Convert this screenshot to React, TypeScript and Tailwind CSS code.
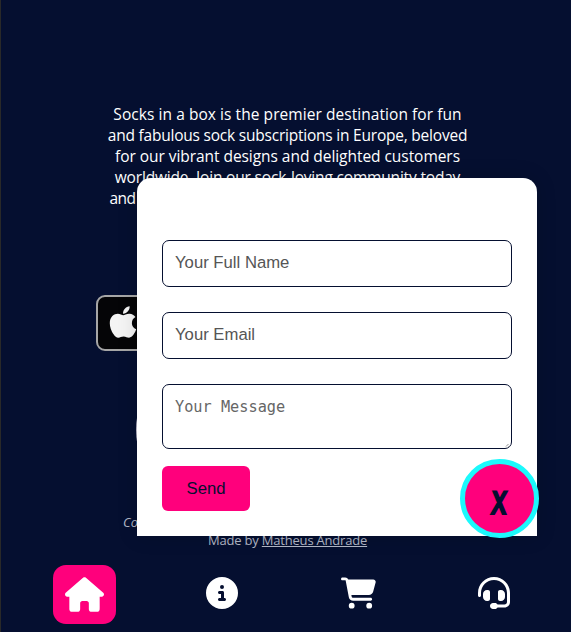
import type { ReactNode } from "react";
import { FaApple, FaCartShopping, FaCircleInfo, FaHeadset, FaHouse } from "react-icons/fa6";

function Line({ className, children }: { className: string; children: ReactNode }) {
  return <span className={`block h-[21px] whitespace-nowrap leading-[21px] ${className}`}>{children}</span>;
}

function ContactForm() {
  return (
    <form className="absolute left-[136px] top-[178px] h-[358px] w-[400px] rounded-t-[14px] bg-white px-[25px] pt-[62px] shadow-[0_0_20px_rgba(0,0,0,0.15)] font-['Liberation_Sans',sans-serif] text-[16.7px]">
      <input
        placeholder="Your Full Name"
        className="mb-[25px] block h-[47px] w-full rounded-[7px] border border-[#050f30] bg-white px-3 pb-[2px] placeholder:text-[#555]"
      />
      <input
        placeholder="Your Email"
        className="mb-[25px] block h-[47px] w-full rounded-[7px] border border-[#050f30] bg-white px-3 pb-[2px] placeholder:text-[#555]"
      />
      <textarea
        placeholder="Your Message"
        className="mb-[17px] block h-[65px] w-full resize-none rounded-[7px] border border-[#050f30] bg-white px-3 py-[13px] font-['DejaVu_Sans_Mono',monospace] text-[15.25px] leading-[19px] placeholder:text-[#666]"
      />
      <button type="button" className="h-[45px] w-[88px] rounded-[6px] bg-[#ff007c] text-[#050f30]">
        Send
      </button>
      <svg className="absolute left-[368px] top-[265px] size-[5px]" viewBox="0 0 5 5" stroke="#777" strokeWidth="0.8">
        <path d="M1 3.5 3.5 1M3 4.5 4.5 3" />
      </svg>
      <button
        type="button"
        aria-label="Close"
        className="absolute left-[323px] top-[281px] flex size-[79px] items-center justify-center rounded-full border-[5px] border-[#1cf9fc] bg-[#ff007c] font-['Inter',sans-serif] text-[31px] font-semibold text-[#050f30]"
      >
        <span className="mt-[8px] scale-x-[0.72] -skew-x-6 leading-none [-webkit-text-stroke:2px_#050f30]">X</span>
      </button>
    </form>
  );
}

function Navigation() {
  return (
    <nav className="mt-auto flex h-[76px] items-start pl-[52px] pt-[9px] text-[32px] text-white">
      <a className="flex h-[59px] w-[63px] shrink-0 items-center justify-center rounded-[13px] bg-[#ff007c]">
        <FaHouse className="h-[35px] w-[39px]" />
      </a>
      <a className="ml-[90px] mt-[12px] shrink-0"><FaCircleInfo /></a>
      <a className="ml-[103px] mt-[12px] shrink-0"><FaCartShopping className="h-[32px] w-[35px]" /></a>
      <a className="ml-[102px] mt-[12px] shrink-0"><FaHeadset /></a>
    </nav>
  );
}

export default function App() {
  return (
    <div className="relative flex h-[632px] w-full flex-col overflow-hidden border-l border-[#292929] bg-[#050f30]">
      <p className="mt-[104px] w-full text-center font-['Open_Sans',sans-serif] text-[15.5px] font-medium text-white">
        <Line className="pl-[3px] tracking-[0.06px]">Socks in a box is the premier destination for fun</Line>
        <Line className="pl-[3px] tracking-[-0.22px]">and fabulous sock subscriptions in Europe, beloved</Line>
        <Line className="pl-[3px] tracking-[-0.05px]">for our vibrant designs and delighted customers</Line>
        <Line className="pl-[3px] tracking-[-0.18px]">worldwide. Join our sock-loving community today</Line>
        <Line className="pl-[108.5px] text-left tracking-[-0.6px]">and</Line>
      </p>
      <div className="ml-[95px] mt-[86px] flex h-[56px] w-[180px] shrink-0 items-center rounded-[9px] border-2 border-[#a6a6a6] bg-[#050507] pl-[7px] text-[#f4f4f4]">
        <FaApple className="mb-[2px] h-[36px] w-[36px]" />
      </div>
      <div className="ml-[134.5px] mt-[4px] size-[150px] shrink-0 rounded-full bg-[#c8c5d2]" />
      <footer className="mt-[8px] font-['Open_Sans',sans-serif] text-[13px] leading-[18px] text-[#b2b7c6]">
        <p className="ml-[122px] italic">Copyright</p>
        <p className="ml-[207px] whitespace-nowrap tracking-[-0.2px]">
          Made by <a className="underline">Matheus Andrade</a>
        </p>
      </footer>
      <Navigation />
      <ContactForm />
    </div>
  );
}
